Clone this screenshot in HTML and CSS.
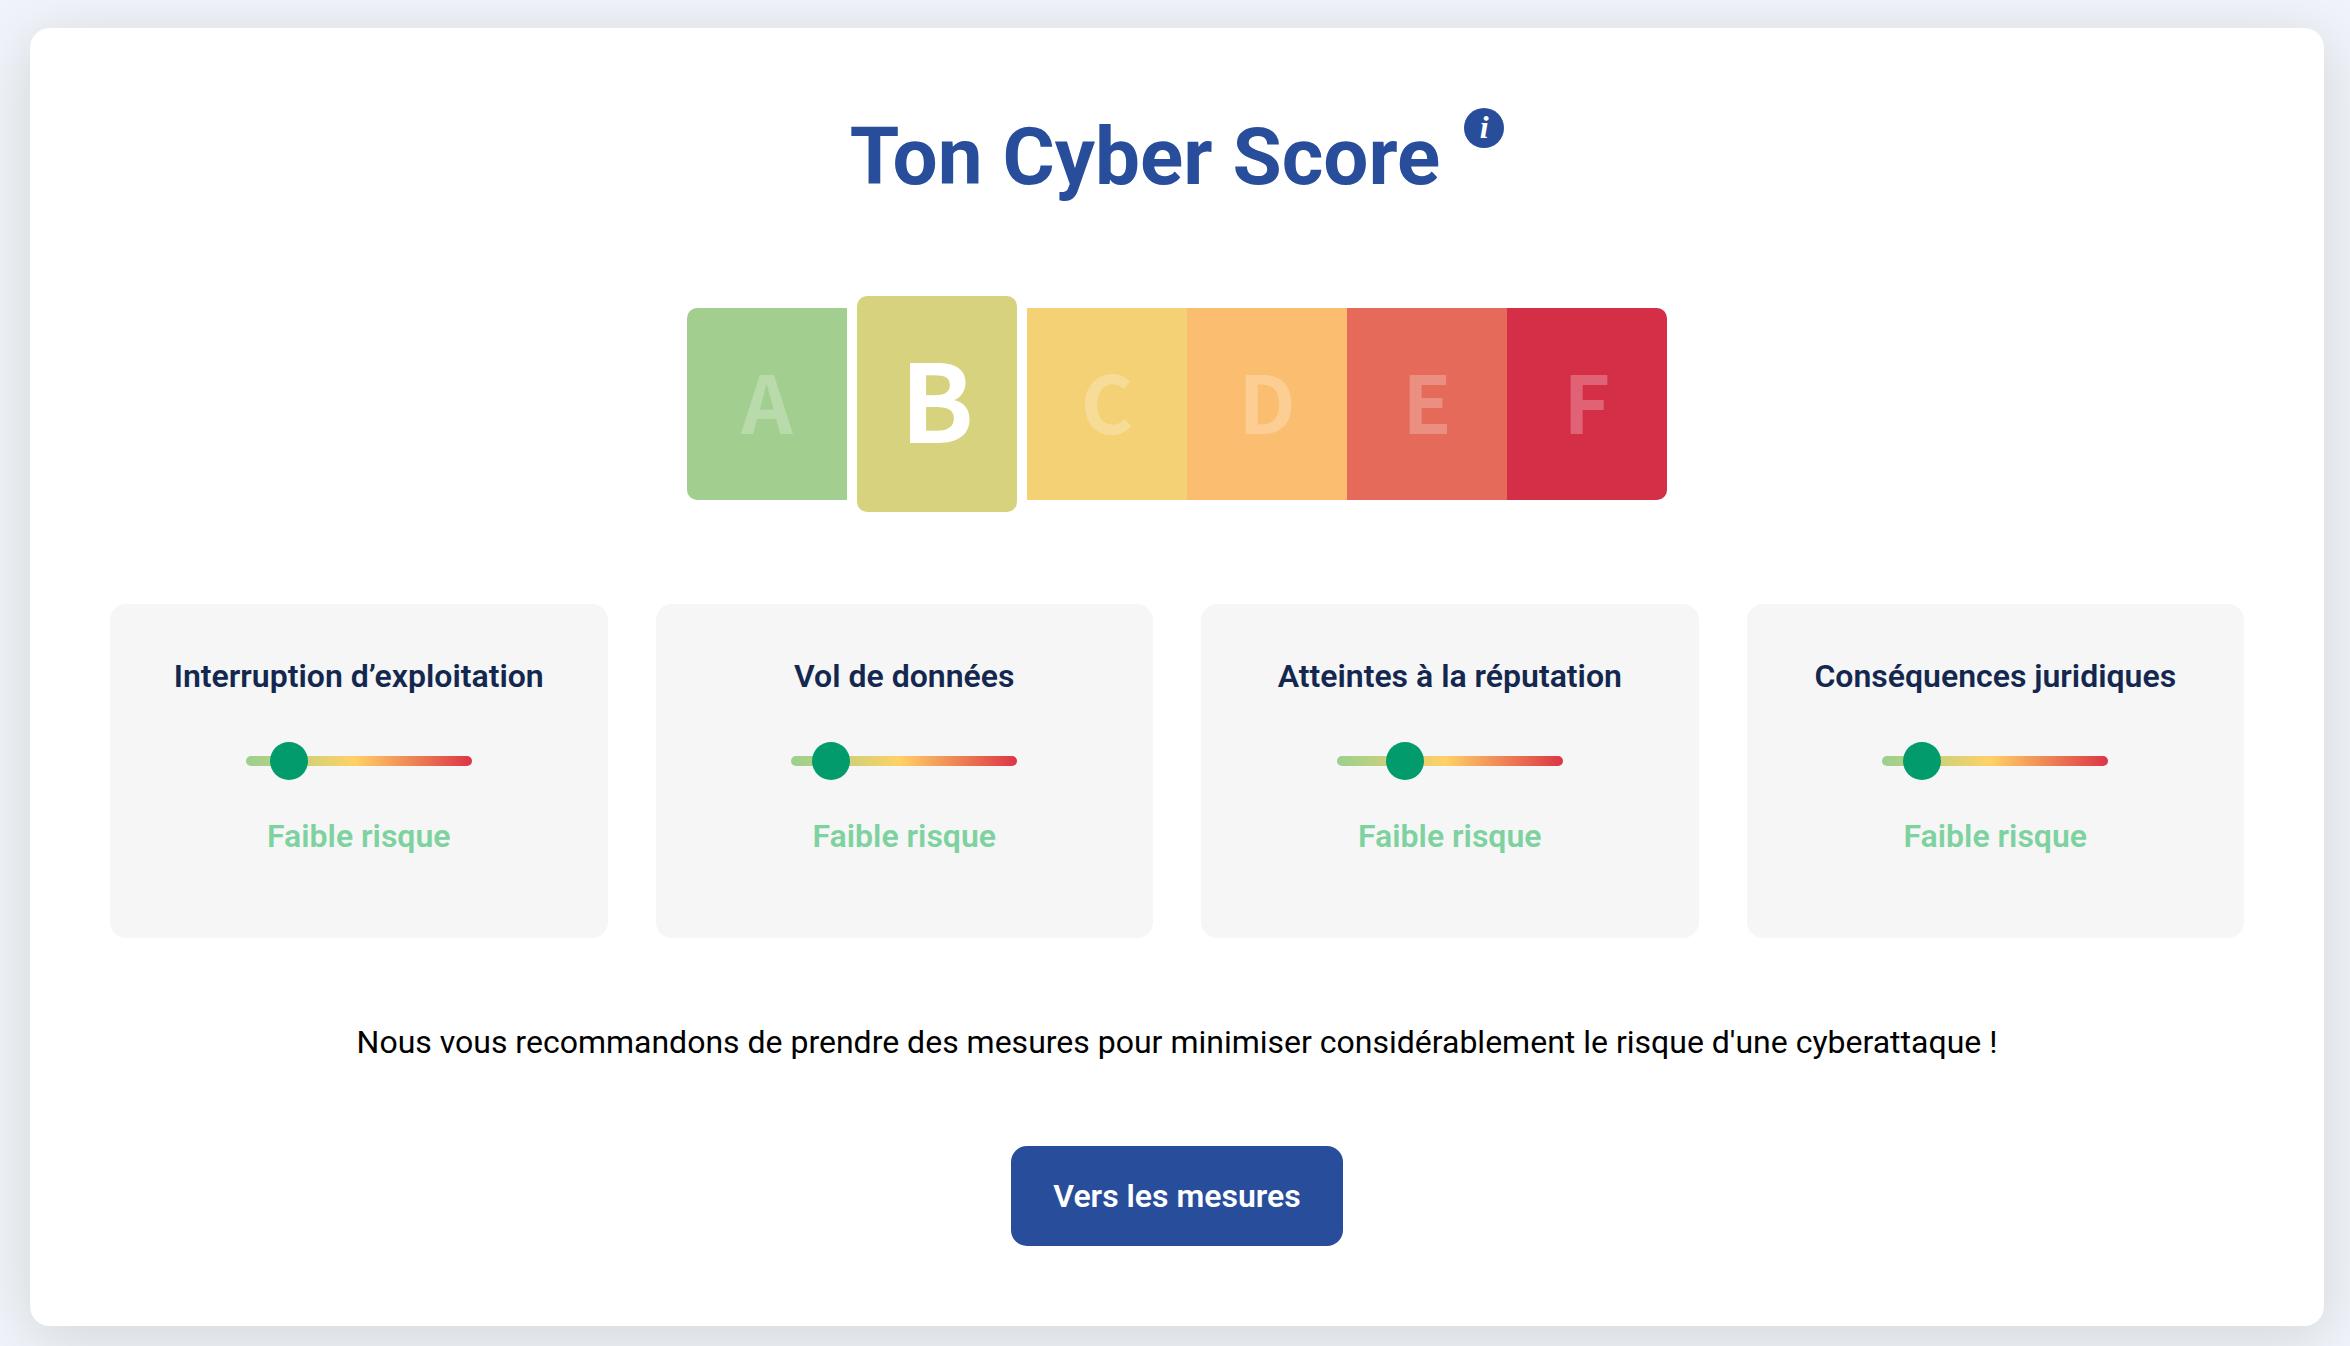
FILE: index.html
```html
<!DOCTYPE html>
<html lang="fr">
<head>
  <meta charset="UTF-8">
  <meta name="viewport" content="width=device-width, initial-scale=1.0">
  <title>Ton Cyber Score</title>
  <link rel="stylesheet" href="styles.css">
</head>
<body>
  <main class="container">
    <div class="heading">
      <h1>Ton Cyber Score</h1>
      <button class="info-btn" type="button">i</button>
    </div>

    <div class="score">
      <span class="grade grade-a">A</span>
      <span class="grade grade-b active">B</span>
      <span class="grade grade-c">C</span>
      <span class="grade grade-d">D</span>
      <span class="grade grade-e">E</span>
      <span class="grade grade-f">F</span>
    </div>

    <div class="risks">
      <section class="risk">
        <label for="interruption">Interruption d’exploitation</label>
        <input type="range" id="interruption" min="0" max="100" value="13">
        <p class="level">Faible risque</p>
      </section>
      <section class="risk">
        <label for="vol">Vol de données</label>
        <input type="range" id="vol" min="0" max="100" value="11">
        <p class="level">Faible risque</p>
      </section>
      <section class="risk">
        <label for="reputation">Atteintes à la réputation</label>
        <input type="range" id="reputation" min="0" max="100" value="26">
        <p class="level">Faible risque</p>
      </section>
      <section class="risk">
        <label for="juridique">Conséquences juridiques</label>
        <input type="range" id="juridique" min="0" max="100" value="11">
        <p class="level">Faible risque</p>
      </section>
    </div>

    <p class="advice">Nous vous recommandons de prendre des mesures pour minimiser considérablement le risque d'une cyberattaque !</p>
    <button class="cta" type="button">Vers les mesures</button>
  </main>
</body>
</html>
```

FILE: styles.css
```css
* {
  box-sizing: border-box;
}
body {
  margin: 0;
  padding: 28px 26px 20px 30px;
  background-color: #f0f3f9;
  font-family: Roboto, sans-serif;
  font-size: 32px;
  line-height: 40px;
  color: #000;
}
h1, p {
  margin: 0;
}
button {
  border: none;
  padding: 0;
  font-family: inherit;
  color: #fff;
  background-color: #284e9b;
  cursor: pointer;
}
.container {
  display: flex;
  flex-direction: column;
  align-items: center;
  padding: 80px;
  background-color: #fff;
  border-radius: 20px;
  box-shadow: 0 10px 60px rgba(10, 30, 10, 0.13);
}

/* title */
.heading {
  display: flex;
  align-items: flex-start;
  gap: 24px;
}
h1 {
  font-size: 80px;
  line-height: 98px;
  font-weight: 700;
  color: #284e9b;
}
.info-btn {
  width: 40px;
  height: 40px;
  padding-bottom: 2px;
  border-radius: 50%;
  font-family: "Liberation Serif", serif;
  font-size: 32px;
  line-height: 38px;
  font-style: italic;
  font-weight: 700;
}

/* A to F scale */
.score {
  display: flex;
  align-items: center;
  margin-top: 90px;
}
.grade {
  display: flex;
  align-items: center;
  justify-content: center;
  width: 160px;
  height: 192px;
  padding-bottom: 10px;
  font-family: "Noto Sans CJK SC", sans-serif;
  font-size: 80px;
  line-height: 96px;
  font-weight: 700;
  color: rgba(255, 255, 255, 0.25);
}
.grade.active {
  height: 216px;
  margin: 0 10px;
  padding-bottom: 16px;
  border-radius: 10px;
  font-size: 108px;
  color: #fff;
}
.grade-a {
  background-color: #a2cf90;
  border-radius: 10px 0 0 10px;
}
.grade-b {
  background-color: #d7d27e;
}
.grade-c {
  background-color: #f5d176;
}
.grade-d {
  background-color: #fbbe70;
}
.grade-e {
  background-color: #e56a5a;
}
.grade-f {
  background-color: #d52f47;
  border-radius: 0 10px 10px 0;
}

/* risk cards */
.risks {
  display: grid;
  grid-template-columns: repeat(4, 1fr);
  gap: 48px;
  width: 100%;
  margin-top: 92px;
}
.risk {
  display: flex;
  flex-direction: column;
  align-items: center;
  padding: 52px 20px 82px;
  background-color: #f6f6f6;
  border-radius: 16px;
  text-align: center;
}
.risk label {
  font-weight: 600;
  color: #14284f;
}
.risk input {
  appearance: none;
  width: 226px;
  height: 38px;
  margin: 46px 0 36px;
  background: transparent;
}
.risk input::-webkit-slider-runnable-track {
  height: 10px;
  border-radius: 5px;
  background: linear-gradient(90deg, #9ad08f, #ffd166 48%, #dc3545);
}
.risk input::-webkit-slider-thumb {
  appearance: none;
  width: 38px;
  height: 38px;
  margin-top: -14px;
  border-radius: 50%;
  background-color: #029c6c;
}
.level {
  font-weight: 600;
  color: #7dd29f;
}

.advice {
  margin-top: 84px;
  text-align: center;
}
.cta {
  margin-top: 84px;
  padding: 30px 42px;
  border-radius: 16px;
  font-size: 32px;
  line-height: 40px;
  font-weight: 600;
}
```
